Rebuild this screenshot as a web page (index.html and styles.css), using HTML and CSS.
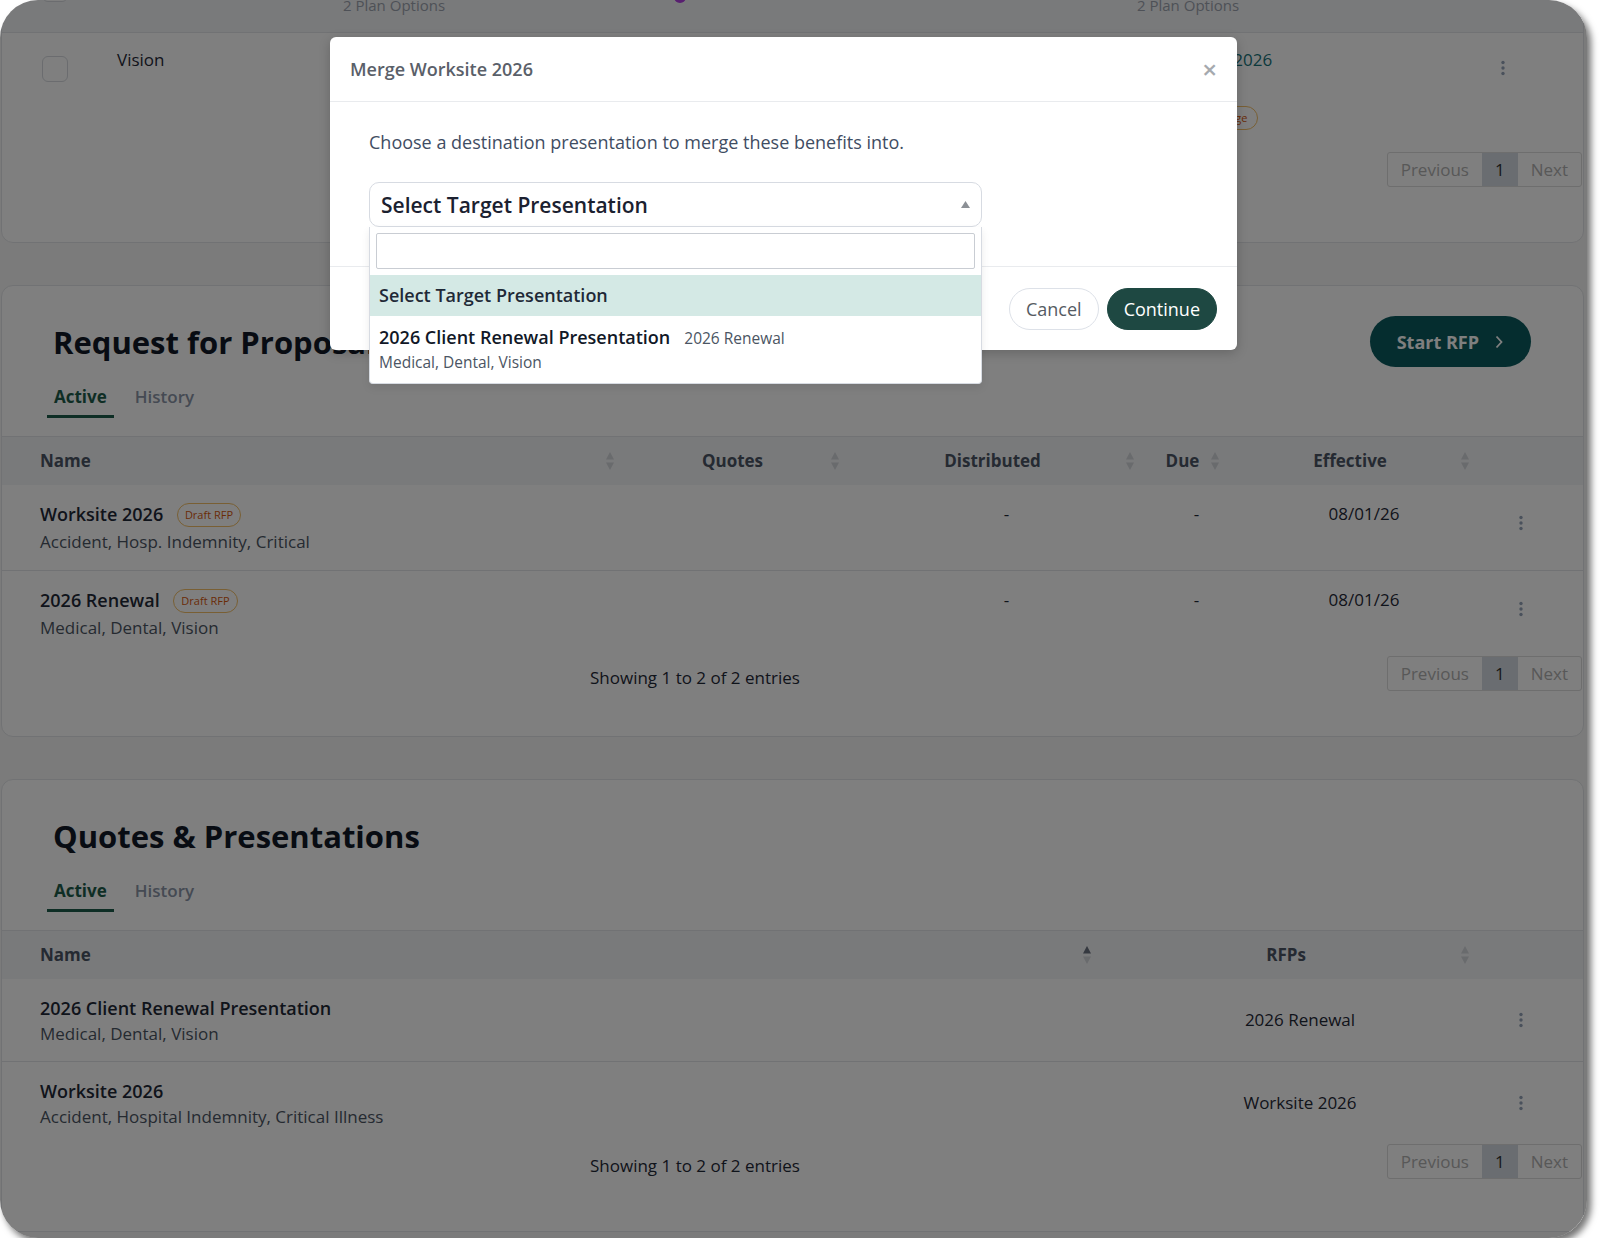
FILE: index.html
```html
<!DOCTYPE html>
<html>
<head>
    <meta charset="UTF-8">
    <title>Worksite 2026</title>
    <link rel="stylesheet" href="styles.css">
</head>
<body>
    <div class="window">
        <div class="page">

            <!-- plan options (scrolled up, only the bottom shows) -->
            <section class="card plans">
                <div class="plan-head">
                    <span class="check head-check"></span>
                    <div class="plan-col"><b>2026 Renewal</b><span>2 Plan Options</span></div>
                    <span class="plan-dot"></span>
                    <div class="plan-col"><b>Worksite 2026</b><span>2 Plan Options</span></div>
                </div>
                <div class="plan-row">
                    <span class="check"></span>
                    <span class="plan-name">Vision</span>
                    <div class="plan-target">
                        <span class="link">Worksite 2026</span>
                        <span class="badge">Pending Merge</span>
                    </div>
                    <span class="kebab"><svg width="4" height="16" viewBox="0 0 4 16"><circle cx="2" cy="2.5" r="1.7"/><circle cx="2" cy="8" r="1.7"/><circle cx="2" cy="13.5" r="1.7"/></svg></span>
                </div>
                <div class="card-foot">
                    <span class="info">Showing 1 to 1 of 1 entries</span>
                    <div class="pager"><span>Previous</span><span class="current">1</span><span>Next</span></div>
                </div>
            </section>

            <!-- RFPs -->
            <section class="card rfp">
                <div class="card-head">
                    <h2>Request for Proposals</h2>
                    <button class="btn-start">Start RFP
                        <svg width="8" height="14" viewBox="0 0 8 14"><polyline points="1.5,1.5 6.5,7 1.5,12.5" fill="none" stroke="currentColor" stroke-width="1.8"/></svg>
                    </button>
                </div>
                <div class="tabs">
                    <span class="tab active">Active</span>
                    <span class="tab">History</span>
                </div>
                <div class="table">
                    <div class="thead">
                        <div class="th name">Name<svg class="sort" width="8" height="18" viewBox="0 0 8 18"><path d="M4 0L8 7.5H0Z"/><path d="M0 10.5H8L4 18Z"/></svg></div>
                        <div class="th">Quotes<svg class="sort" width="8" height="18" viewBox="0 0 8 18"><path d="M4 0L8 7.5H0Z"/><path d="M0 10.5H8L4 18Z"/></svg></div>
                        <div class="th">Distributed<svg class="sort" width="8" height="18" viewBox="0 0 8 18"><path d="M4 0L8 7.5H0Z"/><path d="M0 10.5H8L4 18Z"/></svg></div>
                        <div class="th">Due<svg class="sort" width="8" height="18" viewBox="0 0 8 18"><path d="M4 0L8 7.5H0Z"/><path d="M0 10.5H8L4 18Z"/></svg></div>
                        <div class="th">Effective<svg class="sort" width="8" height="18" viewBox="0 0 8 18"><path d="M4 0L8 7.5H0Z"/><path d="M0 10.5H8L4 18Z"/></svg></div>
                        <div class="th"></div>
                    </div>
                    <div class="trow">
                        <div class="td name">
                            <div class="title">Worksite 2026 <span class="badge">Draft RFP</span></div>
                            <div class="sub">Accident, Hosp. Indemnity, Critical</div>
                        </div>
                        <div class="td"></div>
                        <div class="td">-</div>
                        <div class="td">-</div>
                        <div class="td">08/01/26</div>
                        <div class="td actions"><span class="kebab"><svg width="4" height="16" viewBox="0 0 4 16"><circle cx="2" cy="2.5" r="1.7"/><circle cx="2" cy="8" r="1.7"/><circle cx="2" cy="13.5" r="1.7"/></svg></span></div>
                    </div>
                    <div class="trow">
                        <div class="td name">
                            <div class="title">2026 Renewal <span class="badge">Draft RFP</span></div>
                            <div class="sub">Medical, Dental, Vision</div>
                        </div>
                        <div class="td"></div>
                        <div class="td">-</div>
                        <div class="td">-</div>
                        <div class="td">08/01/26</div>
                        <div class="td actions"><span class="kebab"><svg width="4" height="16" viewBox="0 0 4 16"><circle cx="2" cy="2.5" r="1.7"/><circle cx="2" cy="8" r="1.7"/><circle cx="2" cy="13.5" r="1.7"/></svg></span></div>
                    </div>
                </div>
                <div class="card-foot">
                    <span class="info">Showing 1 to 2 of 2 entries</span>
                    <div class="pager"><span>Previous</span><span class="current">1</span><span>Next</span></div>
                </div>
            </section>

            <!-- quotes -->
            <section class="card quotes">
                <div class="card-head">
                    <h2>Quotes &amp; Presentations</h2>
                </div>
                <div class="tabs">
                    <span class="tab active">Active</span>
                    <span class="tab">History</span>
                </div>
                <div class="table">
                    <div class="thead">
                        <div class="th name">Name<svg class="sort asc" width="8" height="18" viewBox="0 0 8 18"><path class="up" d="M4 0L8 7.5H0Z"/><path d="M0 10.5H8L4 18Z"/></svg></div>
                        <div class="th">RFPs<svg class="sort" width="8" height="18" viewBox="0 0 8 18"><path d="M4 0L8 7.5H0Z"/><path d="M0 10.5H8L4 18Z"/></svg></div>
                        <div class="th"></div>
                    </div>
                    <div class="trow">
                        <div class="td name">
                            <div class="title">2026 Client Renewal Presentation</div>
                            <div class="sub">Medical, Dental, Vision</div>
                        </div>
                        <div class="td mid">2026 Renewal</div>
                        <div class="td actions mid"><span class="kebab"><svg width="4" height="16" viewBox="0 0 4 16"><circle cx="2" cy="2.5" r="1.7"/><circle cx="2" cy="8" r="1.7"/><circle cx="2" cy="13.5" r="1.7"/></svg></span></div>
                    </div>
                    <div class="trow">
                        <div class="td name">
                            <div class="title">Worksite 2026</div>
                            <div class="sub">Accident, Hospital Indemnity, Critical Illness</div>
                        </div>
                        <div class="td mid">Worksite 2026</div>
                        <div class="td actions mid"><span class="kebab"><svg width="4" height="16" viewBox="0 0 4 16"><circle cx="2" cy="2.5" r="1.7"/><circle cx="2" cy="8" r="1.7"/><circle cx="2" cy="13.5" r="1.7"/></svg></span></div>
                    </div>
                </div>
                <div class="card-foot">
                    <span class="info">Showing 1 to 2 of 2 entries</span>
                    <div class="pager"><span>Previous</span><span class="current">1</span><span>Next</span></div>
                </div>
            </section>
        </div>

        <div class="backdrop"></div>

        <div class="modal">
            <div class="modal-head">
                <h3>Merge Worksite 2026</h3>
                <span class="close">&times;</span>
            </div>
            <div class="modal-body">
                <p>Choose a destination presentation to merge these benefits into.</p>
                <div class="select">
                    <div class="select-box">
                        <span>Select Target Presentation</span>
                        <svg width="9" height="7" viewBox="0 0 9 7"><path d="M4.5 0L9 7H0Z" fill="#8c9096"/></svg>
                    </div>
                    <div class="dropdown">
                        <input class="search" type="text">
                        <div class="option highlighted">Select Target Presentation</div>
                        <div class="option">
                            <div><span class="opt-title">2026 Client Renewal Presentation</span><span class="opt-tag">2026 Renewal</span></div>
                            <div class="opt-sub">Medical, Dental, Vision</div>
                        </div>
                    </div>
                </div>
            </div>
            <div class="modal-foot">
                <button class="btn btn-cancel">Cancel</button>
                <button class="btn btn-continue">Continue</button>
            </div>
        </div>
    </div>
</body>
</html>
```

FILE: styles.css
```css
* {
    box-sizing: border-box;
}
body {
    margin: 0;
    background: #fff;
    font-family: "Open Sans", sans-serif;
    font-size: 17px;
    color: #1f2937;
}
.window {
    position: relative;
    width: 1587px;
    height: 1238px;
    border-radius: 38px;
    overflow: hidden;
    background: #f6f6f6;
    box-shadow: 4px 5px 7px rgba(0, 0, 0, 0.55);
}
.page {
    display: flex;
    flex-direction: column;
    gap: 42px;
    margin-top: -39px;
    padding-left: 1px;
}
.card {
    width: 1583px;
    background: #fff;
    border: 1px solid #e3e5e8;
    border-radius: 12px;
}

/* plan options */
.plan-head {
    display: grid;
    grid-template-columns: 341px 339px 455px 1fr;
    height: 71px;
    background: #f3f4f6;
    border-bottom: 1px solid #e3e5e8;
}
.plan-col {
    display: flex;
    flex-direction: column;
    align-self: end;
    padding-bottom: 17px;
}
.plan-col b {
    font-size: 17px;
    line-height: 24px;
    color: #1f2937;
}
.plan-col span {
    font-size: 15px;
    line-height: 20px;
    color: #9ca3af;
}
.plan-dot {
    align-self: end;
    width: 12px;
    height: 12px;
    margin: 0 0 29px -8px;
    border-radius: 50%;
    background: #b13fe0;
}
.check {
    display: block;
    width: 26px;
    height: 26px;
    border: 1px solid #d6d9de;
    border-radius: 6px;
    background: #fff;
}
.head-check {
    margin: 14px 0 0 40px;
}
.plan-row {
    display: grid;
    grid-template-columns: 98px 1059px 342px 1fr;
    align-items: start;
    height: 107px;
    padding-top: 14px;
}
.plan-row .check {
    margin: 9px 0 0 40px;
}
.plan-name {
    margin-left: 17px;
    line-height: 26px;
}
.plan-target {
    display: flex;
    flex-direction: column;
    align-items: flex-start;
    gap: 33px;
}
.link {
    line-height: 26px;
    color: #17747a;
}
.plan-row .kebab {
    margin-top: 13px;
}
.plans .card-foot {
    margin-top: 12px;
    padding-bottom: 55px;
}

.badge {
    display: inline-block;
    height: 24px;
    padding: 0 7px;
    border: 1px solid #f2bf68;
    border-radius: 12px;
    font-size: 11px;
    font-weight: 400;
    line-height: 22px;
    color: #d4580e;
    vertical-align: middle;
}
.plan-target .badge {
    padding: 0 10px;
}
.kebab {
    display: block;
    width: 4px;
    height: 16px;
}
.kebab svg {
    display: block;
    fill: #94a3b8;
}

/* section cards */
.card-head {
    display: flex;
    align-items: center;
    justify-content: space-between;
    min-height: 51px;
    margin: 30px 52px 0 51px;
}
.card-head h2 {
    margin: 0;
    font-size: 31px;
    font-weight: 700;
    line-height: 40px;
    color: #111827;
}
.btn-start {
    display: flex;
    align-items: center;
    gap: 16px;
    height: 51px;
    padding: 0 28px 0 27px;
    border: 0;
    border-radius: 26px;
    background: #0b5a5e;
    color: #fff;
    font-family: inherit;
    font-size: 18px;
    font-weight: 700;
}
.btn-start svg {
    display: block;
}
.tabs {
    display: flex;
    gap: 14px;
    margin: 17px 0 18px 45px;
}
.tab {
    padding: 0 7px 5px;
    border-bottom: 3px solid transparent;
    font-size: 17px;
    font-weight: 600;
    line-height: 26px;
    color: #8a94a6;
}
.tab.active {
    border-color: #1d5c4a;
    font-weight: 700;
    color: #1d5c4a;
}

.table {
    border-top: 1px solid #e3e5e8;
}
.thead,
.trow {
    display: grid;
}
.rfp .thead,
.rfp .trow {
    grid-template-columns: 618px 225px 295px 85px 250px 1fr;
}
.quotes .thead,
.quotes .trow {
    grid-template-columns: 1095px 378px 1fr;
}
.thead {
    align-items: center;
    height: 48px;
    background: #f3f4f6;
}
.th {
    position: relative;
    font-weight: 700;
    line-height: 24px;
    text-align: center;
    color: #4b5565;
}
.th.name {
    padding-left: 38px;
    text-align: left;
}
.sort {
    position: absolute;
    right: 6px;
    top: 3px;
    fill: #d3d6db;
}
.sort.asc .up {
    fill: #6b7280;
}
.trow {
    border-bottom: 1px solid #e3e5e8;
}
.trow:last-child {
    border-bottom: 0;
}
.td {
    padding-top: 16px;
    padding-left: 28px;
    line-height: 26px;
    text-align: center;
    color: #1f2937;
}
.td.name {
    padding: 16px 0 15px 38px;
    text-align: left;
}
.quotes .td.name {
    padding-bottom: 14px;
}
.td.mid {
    align-self: center;
    padding-top: 0;
}
.title {
    font-size: 18px;
    font-weight: 600;
    color: #1f2937;
}
.title .badge {
    margin-left: 9px;
    margin-top: -3px;
}
.rfp .title {
    margin-bottom: 2px;
}
.sub {
    color: #4b5563;
}
.td.actions {
    padding-left: 44px;
}
.rfp .td.actions {
    padding-top: 30px;
}

.card-foot {
    display: flex;
    align-items: flex-start;
    padding-bottom: 45px;
}
.quotes .card-foot {
    padding-bottom: 52px;
}
.info {
    margin: 9px 0 0 588px;
    line-height: 26px;
    color: #1f2937;
}
.pager {
    display: flex;
    margin-left: auto;
    margin-right: 1px;
    border: 1px solid #dcdcdc;
    border-radius: 3px;
}
.pager span {
    padding: 0 13px;
    line-height: 33px;
    color: #b0b0b0;
}
.pager .current {
    background: #d5dae3;
    color: #333;
}

/* merge dialog */
.backdrop {
    position: absolute;
    inset: 0;
    background: rgba(0, 0, 0, 0.5);
}
.modal {
    position: absolute;
    left: 330px;
    top: 37px;
    width: 907px;
    background: #fff;
    border-radius: 6px;
    box-shadow: 0 3px 12px rgba(0, 0, 0, 0.2);
}
.modal-head {
    display: flex;
    align-items: center;
    justify-content: space-between;
    height: 65px;
    padding: 0 20px;
    border-bottom: 1px solid #e9ebee;
}
.modal-head h3 {
    margin: 0;
    font-size: 18px;
    font-weight: 600;
    color: #5a6069;
}
.close {
    font-size: 26px;
    font-weight: 600;
    line-height: 1;
    color: #a6a9ae;
}
.modal-body {
    padding: 27px 39px 39px;
}
.modal-body p {
    margin: 0 0 27px;
    font-size: 18px;
    line-height: 26px;
    color: #3f4d63;
}
.select {
    position: relative;
    width: 613px;
}
.select-box {
    display: flex;
    align-items: center;
    justify-content: space-between;
    height: 45px;
    padding: 0 11px;
    border: 1px solid #d7dbe2;
    border-radius: 10px;
    font-size: 21px;
    font-weight: 600;
    color: #1b2130;
}
.dropdown {
    position: absolute;
    left: 0;
    right: 0;
    top: 45px;
    z-index: 2;
    padding-top: 6px;
    background: #fff;
    border: 1px solid #d7dbe2;
    border-top: 0;
    border-radius: 0 0 4px 4px;
    box-shadow: 0 4px 8px rgba(0, 0, 0, 0.08);
}
.search {
    display: block;
    width: 599px;
    height: 36px;
    margin: 0 0 6px 6px;
    border: 1px solid #c9cdd3;
    border-radius: 2px;
    outline: none;
}
.option {
    padding: 7px 9px 8px;
    font-size: 18px;
    font-weight: 600;
    line-height: 26px;
    color: #1f2937;
}
.option.highlighted {
    background: #d4e9e5;
}
.option + .option {
    padding: 8px 9px 10px;
}
.opt-title {
    font-weight: 600;
    color: #111827;
}
.opt-tag {
    margin-left: 14px;
    font-size: 15.5px;
    font-weight: 400;
    color: #4b5563;
}
.opt-sub {
    font-size: 15.5px;
    font-weight: 400;
    line-height: 22px;
    color: #4b5563;
}
.modal-foot {
    display: flex;
    align-items: center;
    justify-content: flex-end;
    gap: 8px;
    height: 84px;
    padding: 0 20px;
    border-top: 1px solid #e9ebee;
}
.btn {
    height: 42px;
    padding: 0 16px;
    border-radius: 21px;
    font-family: inherit;
    font-size: 18px;
}
.btn-cancel {
    background: #fff;
    border: 1px solid #dde1e8;
    color: #555b63;
}
.btn-continue {
    background: #1e4842;
    border: 1px solid #1e4842;
    color: #fff;
}
```
